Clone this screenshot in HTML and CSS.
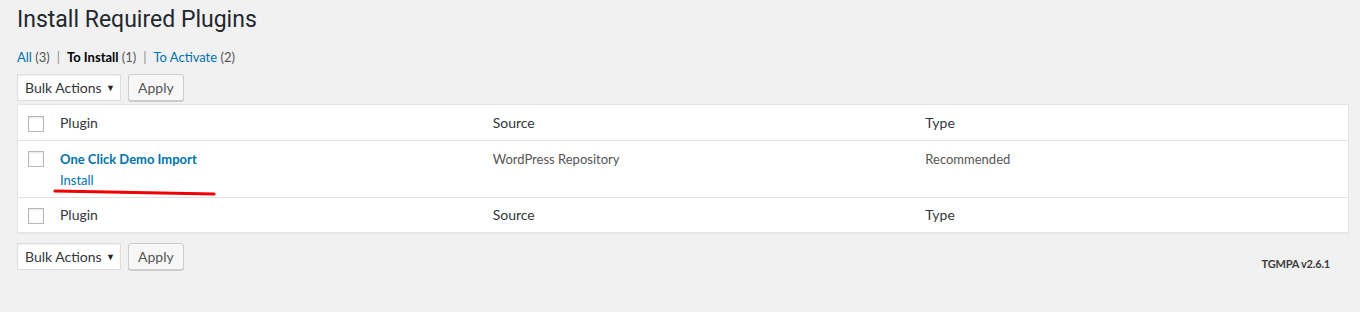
FILE: index.html
```html
<!DOCTYPE html>
<html>
  <head>
    <title>Install Required Plugins</title>
    <meta name="viewport" content="width=device-width, initial-scale=1" />
    <link rel="stylesheet" href="styles.css">
  </head>
  <body>
    <div class="wrap">
      <h1>Install Required Plugins</h1>

      <ul class="subsubsub">
        <li><a href="#">All <span class="count">(3)</span></a></li>
        <li class="sep">|</li>
        <li><a href="#" class="current">To Install <span class="count">(1)</span></a></li>
        <li class="sep">|</li>
        <li><a href="#">To Activate <span class="count">(2)</span></a></li>
      </ul>

      <div class="tablenav">
        <div class="select">Bulk Actions <span class="arrow">&#9660;</span></div>
        <button class="button" type="button">Apply</button>
      </div>

      <table class="plugins">
        <colgroup>
          <col class="col-check" />
          <col />
          <col />
          <col />
        </colgroup>
        <thead>
          <tr>
            <td class="check"><span class="box"></span></td>
            <th>Plugin</th>
            <th>Source</th>
            <th>Type</th>
          </tr>
        </thead>
        <tbody>
          <tr>
            <td class="check"><span class="box"></span></td>
            <td class="name">
              <a href="#" class="title">One Click Demo Import</a>
              <div class="row-actions"><a href="#">Install</a></div>
              <svg class="mark" width="170" height="10" viewBox="0 0 170 10">
                <path d="M2 3 Q 90 4.5 161 6" stroke="#f00000" stroke-width="3.2" fill="none" stroke-linecap="round" />
              </svg>
            </td>
            <td>WordPress Repository</td>
            <td>Recommended</td>
          </tr>
        </tbody>
        <tfoot>
          <tr>
            <td class="check"><span class="box"></span></td>
            <th>Plugin</th>
            <th>Source</th>
            <th>Type</th>
          </tr>
        </tfoot>
      </table>

      <div class="tablenav bottom">
        <div class="select">Bulk Actions <span class="arrow">&#9660;</span></div>
        <button class="button" type="button">Apply</button>
        <p class="version">TGMPA v2.6.1</p>
      </div>
    </div>
  </body>
</html>
```

FILE: styles.css
```css
body {
  margin: 0;
  background-color: #f1f1f1;
  color: #444;
  font-family: "Segoe UI", Lato, sans-serif;
  font-size: 13px;
}

a {
  color: #0073aa;
  text-decoration: none;
}

.wrap {
  padding: 0 11px 0 17px;
}

h1 {
  margin: 0;
  padding: 5px 0 0;
  font-family: "Segoe UI", Roboto, sans-serif;
  font-size: 23px;
  font-weight: 400;
  line-height: 30px;
  color: #23282d;
}

.subsubsub {
  list-style: none;
  margin: 12px 0 0;
  padding: 0;
  display: flex;
  gap: 7px;
  color: #666;
  line-height: 20px;
}

.subsubsub .sep {
  color: #8c8f94;
}

.subsubsub a .count {
  color: #555;
}

.subsubsub a.current {
  color: #000;
  font-weight: 700;
}

.subsubsub a.current .count {
  font-weight: 400;
}

.tablenav {
  display: flex;
  gap: 7px;
  margin-top: 7px;
}

.tablenav.bottom {
  margin-top: 10px;
}

.select {
  box-sizing: border-box;
  width: 104px;
  height: 27px;
  padding: 0 0 0 7px;
  border: 1px solid #ddd;
  background: #fff;
  box-shadow: inset 0 1px 2px rgba(0, 0, 0, 0.07);
  color: #32373c;
  font-size: 14px;
  line-height: 25px;
  white-space: nowrap;
  display: flex;
  justify-content: space-between;
}

.select .arrow {
  font-size: 9px;
  width: 14px;
  color: #222;
}

.button {
  box-sizing: border-box;
  height: 27px;
  padding: 0 9px;
  border: 1px solid #ccc;
  border-radius: 3px;
  background: #f7f7f7;
  box-shadow: 0 1px 0 #ccc;
  color: #555;
  font-family: inherit;
  font-size: 14px;
  line-height: 25px;
}

.plugins {
  width: 100%;
  margin-top: 3px;
  border: 1px solid #e5e5e5;
  border-spacing: 0;
  background: #fff;
  box-shadow: 0 1px 1px rgba(0, 0, 0, 0.04);
  table-layout: fixed;
}

.col-check {
  width: 32px;
}

.plugins th,
.plugins td {
  text-align: left;
  font-weight: 400;
  padding: 8px 10px;
  vertical-align: top;
  line-height: 20px;
}

.plugins thead th,
.plugins thead td {
  border-bottom: 1px solid #e1e1e1;
  color: #32373c;
  font-size: 14px;
  padding: 8px 10px 7px;
}

.plugins tfoot th,
.plugins tfoot td {
  border-top: 1px solid #e1e1e1;
  color: #32373c;
  font-size: 14px;
  padding: 7px 10px 7px;
}

.plugins tbody td {
  color: #555;
  padding: 8px 10px 7px;
}

.plugins .check {
  padding-left: 10px;
  padding-right: 0;
}

.box {
  display: block;
  width: 14px;
  height: 14px;
  margin-top: 2px;
  border: 1px solid #b4b9be;
  background: #fff;
  box-shadow: inset 0 1px 2px rgba(0, 0, 0, 0.1);
}

.plugins thead .box,
.plugins tfoot .box {
  margin-top: 3px;
}

.name {
  position: relative;
}

.name .title {
  font-weight: 700;
}

.row-actions {
  margin-top: 1px;
}

.mark {
  position: absolute;
  left: 3px;
  top: 47px;
}

.version {
  margin: 14px 19px 0 auto;
  font-size: 11px;
  font-weight: 700;
  letter-spacing: -0.2px;
  line-height: 14px;
  color: #3c3c3c;
}
```
